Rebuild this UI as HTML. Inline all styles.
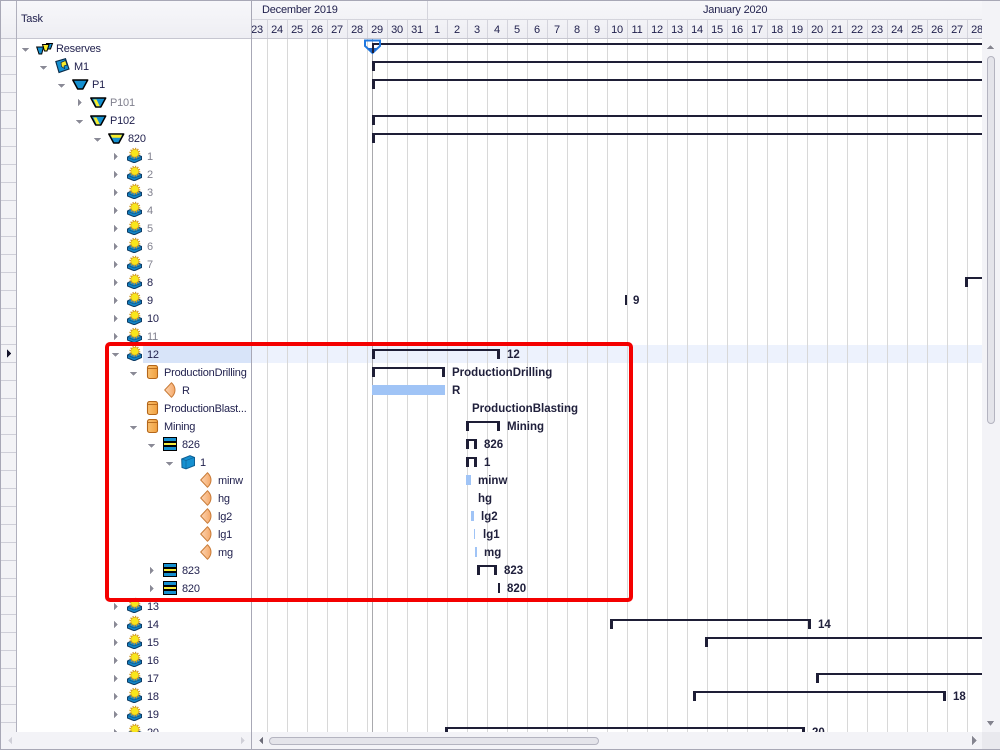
<!DOCTYPE html>
<html><head><meta charset="utf-8"><style>
html,body{margin:0;padding:0;background:#fff;width:1000px;height:750px;overflow:hidden}
#p{position:relative;width:1000px;height:750px;overflow:hidden;font-family:"Liberation Sans",sans-serif;font-size:11px;letter-spacing:-.2px;color:#1f1f4c}
svg{position:absolute;left:0;top:0}
.t{position:absolute;line-height:18px;height:18px;white-space:nowrap;margin-top:1px}
.g{color:#80808e}
.b{font-weight:bold;font-size:11.5px;letter-spacing:0;color:#20203c}
.d{position:absolute;top:19px;width:20px;height:19px;line-height:20px;text-align:center;margin-top:1px}
#hd{position:absolute;left:252px;top:0;width:730px;height:39px;overflow:hidden}
#hd .d{margin-left:-252px}
#tree{position:absolute;left:0;top:0;width:1000px;height:732px;overflow:hidden}
</style></head><body><div id="p">
<svg width="1000" height="750" viewBox="0 0 1000 750" shape-rendering="crispEdges">
<defs>
<linearGradient id="hg" x1="0" y1="0" x2="0" y2="1"><stop offset="0" stop-color="#f7f7fa"/><stop offset="1" stop-color="#eeeef3"/></linearGradient>
<linearGradient id="lf" x1="0" y1="0" x2="1" y2="0"><stop offset="0" stop-color="#fcd5b4"/><stop offset="1" stop-color="#f5a868"/></linearGradient>
<linearGradient id="cy" x1="0" y1="0" x2="1" y2="0"><stop offset="0" stop-color="#f9c070"/><stop offset="1" stop-color="#f0a040"/></linearGradient>
<g id="da"><polygon points="0,0 7,0 3.500,4" fill="#8a8a96"/></g>
<g id="ra"><polygon points="0,0 4,3.500 0,7" fill="#8a8a96"/></g>
<g id="sun" shape-rendering="auto">
<path d="M.5 9L4 7H11L14.500 8.500V11.500L8 14.500H6.500L.5 12Z" fill="#1487c8" stroke="#0d3c66"/>
<path d="M1 9.500L7 12 14 9.500" fill="none" stroke="#0b5a90" stroke-width=".8"/>
<circle cx="7.800" cy="5.200" r="4.600" fill="none" stroke="#d09a2a" stroke-width="1.800" stroke-dasharray="1.200 1.210"/>
<circle cx="7.800" cy="5.200" r="3.900" fill="#f8e61c" stroke="#d8a020" stroke-width=".6"/>
</g>
<g id="cyl" shape-rendering="auto"><rect x=".5" y=".5" width="10" height="13" rx="2" fill="url(#cy)" stroke="#b4661a" stroke-width="1.100"/><path d="M1 3.500H10" stroke="#b4661a" stroke-width=".9"/></g>
<g id="leaf" shape-rendering="auto"><path d="M.7 8L7.500 .7C10 3 11 5.500 11 8S10 13 7.500 15.300Z" fill="url(#lf)" stroke="#c87a36" stroke-linejoin="round"/></g>
<g id="st"><rect x="0" y="0" width="14" height="14" fill="#000"/><rect x="1" y="1" width="12" height="3" fill="#1590d0"/><rect x="1" y="6" width="12" height="2" fill="#f6ec3a"/><rect x="1" y="10" width="12" height="3" fill="#1590d0"/></g>
<g id="cube" shape-rendering="auto"><path d="M.7 4L9 .7 13.500 2.500V10.500L5 13.800 1 12.500Z" fill="#1590d0" stroke="#0e5f94"/><path d="M1 4L5 5.500 13 2.500M5 5.500V13.500" fill="none" stroke="#0e5f94" stroke-width=".6"/></g>
<g id="trb" shape-rendering="auto"><path d="M.8 1H15.700L10.800 10H5.700Z" fill="#1590d0" stroke="#000" stroke-width="1.500" stroke-linejoin="round"/></g>
<g id="try" shape-rendering="auto"><path d="M.8 1H15.700L10.800 10H5.700Z" fill="#1590d0" stroke="#000" stroke-width="1.500" stroke-linejoin="round"/><path d="M3.500 2.500H6.500L9.800 9.200H6.500Z" fill="#f8ec2a"/></g>
<g id="trt" shape-rendering="auto"><path d="M.8 1H15.700L10.800 10H5.700Z" fill="#1590d0" stroke="#000" stroke-width="1.500" stroke-linejoin="round"/><path d="M2.500 1.800H14L12.700 4.800H4Z" fill="#f8ec2a"/></g>
</defs>

<rect x="252" y="345" width="731" height="18" fill="#edf2fd"/>
<rect x="143" y="345" width="108" height="18" fill="#d8e4f9"/>

<!-- chart gridlines -->
<path d="M267.500 39V732M287.500 39V732M307.500 39V732M327.500 39V732M347.500 39V732M367.500 39V732M387.500 39V732M407.500 39V732M427.500 39V732M447.500 39V732M467.500 39V732M487.500 39V732M507.500 39V732M527.500 39V732M547.500 39V732M567.500 39V732M587.500 39V732M607.500 39V732M627.500 39V732M647.500 39V732M667.500 39V732M687.500 39V732M707.500 39V732M727.500 39V732M747.500 39V732M767.500 39V732M787.500 39V732M807.500 39V732M827.500 39V732M847.500 39V732M867.500 39V732M887.500 39V732M907.500 39V732M927.500 39V732M947.500 39V732M967.500 39V732" stroke="#d8d8d8" fill="none"/>
<rect x="372" y="39" width="1" height="693" fill="#a9a9ad"/>

<!-- headers -->
<rect x="1" y="1" width="981" height="37" fill="url(#hg)"/>
<rect x="982" y="1" width="18" height="38" fill="#f3f3f7"/>
<rect x="0" y="38" width="982" height="1" fill="#c6c6d0"/>
<rect x="252" y="19" width="730" height="1" fill="#d4d4dc"/>
<path d="M427.500 1V19M267.500 20V38M287.500 20V38M307.500 20V38M327.500 20V38M347.500 20V38M367.500 20V38M387.500 20V38M407.500 20V38M427.500 20V38M447.500 20V38M467.500 20V38M487.500 20V38M507.500 20V38M527.500 20V38M547.500 20V38M567.500 20V38M587.500 20V38M607.500 20V38M627.500 20V38M647.500 20V38M667.500 20V38M687.500 20V38M707.500 20V38M727.500 20V38M747.500 20V38M767.500 20V38M787.500 20V38M807.500 20V38M827.500 20V38M847.500 20V38M867.500 20V38M887.500 20V38M907.500 20V38M927.500 20V38M947.500 20V38M967.500 20V38" stroke="#d4d4dc" fill="none"/>

<!-- indicator column -->
<rect x="1" y="39" width="15" height="693" fill="#f3f3f6"/>
<path d="M1 56.500H16M1 74.500H16M1 92.500H16M1 110.500H16M1 128.500H16M1 146.500H16M1 164.500H16M1 182.500H16M1 200.500H16M1 218.500H16M1 236.500H16M1 254.500H16M1 272.500H16M1 290.500H16M1 308.500H16M1 326.500H16M1 344.500H16M1 362.500H16M1 380.500H16M1 398.500H16M1 416.500H16M1 434.500H16M1 452.500H16M1 470.500H16M1 488.500H16M1 506.500H16M1 524.500H16M1 542.500H16M1 560.500H16M1 578.500H16M1 596.500H16M1 614.500H16M1 632.500H16M1 650.500H16M1 668.500H16M1 686.500H16M1 704.500H16M1 722.500H16" stroke="#cfcfd8" fill="none"/>
<polygon points="7,349 11,353.500 7,358" fill="#14142a"/>
<rect x="16" y="0" width="1" height="732" fill="#b0b0bd"/>
<rect x="251" y="0" width="1" height="750" fill="#a8a8b6"/>

<!-- arrows -->
<use href="#da" x="22" y="48"/><use href="#da" x="40" y="66"/><use href="#da" x="58" y="84"/>
<use href="#ra" x="78" y="99"/><use href="#da" x="76" y="120"/><use href="#da" x="94" y="138"/>
<use href="#ra" x="114" y="153"/><use href="#ra" x="114" y="171"/><use href="#ra" x="114" y="189"/><use href="#ra" x="114" y="207"/><use href="#ra" x="114" y="225"/><use href="#ra" x="114" y="243"/><use href="#ra" x="114" y="261"/><use href="#ra" x="114" y="279"/><use href="#ra" x="114" y="297"/><use href="#ra" x="114" y="315"/><use href="#ra" x="114" y="333"/>
<use href="#da" x="112" y="353"/><use href="#da" x="130" y="372"/><use href="#da" x="130" y="426"/><use href="#da" x="148" y="444"/><use href="#da" x="166" y="462"/>
<use href="#ra" x="150" y="567"/><use href="#ra" x="150" y="585"/>
<use href="#ra" x="114" y="603"/><use href="#ra" x="114" y="621"/><use href="#ra" x="114" y="639"/><use href="#ra" x="114" y="657"/><use href="#ra" x="114" y="675"/><use href="#ra" x="114" y="693"/><use href="#ra" x="114" y="711"/><use href="#ra" x="114" y="729"/>

<!-- top icons -->
<g transform="translate(36,42)" shape-rendering="auto">
<path d="M13 1.500H19L17 7H14.500Z" transform="translate(-2.500,0)" fill="#1590d0" stroke="#000"/>
<path d="M6.500 2.500H13L11 9H8.500Z" fill="#f8ec2a" stroke="#000"/>
<path d="M.7 5H7.500L5.700 12H3Z" fill="#1590d0" stroke="#000"/>
</g>
<g transform="translate(55,58)" shape-rendering="auto">
<path d="M.8 3.500L10.500 .7 14 11 4 14.500Z" fill="#1590d0" stroke="#0a2a48" stroke-width="1.100"/>
<path d="M6 4.500L10.500 2.500 12 7 9 8 9.500 10.500 6.500 8.500Z" fill="#f8ec2a" stroke="#0a2a48" stroke-width=".7"/>
</g>
<use href="#trb" x="72" y="79"/>
<use href="#try" x="90" y="97"/>
<use href="#try" x="90" y="115"/>
<use href="#trt" x="108" y="133"/>

<use href="#sun" x="127" y="148"/><use href="#sun" x="127" y="166"/><use href="#sun" x="127" y="184"/><use href="#sun" x="127" y="202"/><use href="#sun" x="127" y="220"/><use href="#sun" x="127" y="238"/><use href="#sun" x="127" y="256"/><use href="#sun" x="127" y="274"/><use href="#sun" x="127" y="292"/><use href="#sun" x="127" y="310"/><use href="#sun" x="127" y="328"/><use href="#sun" x="127" y="346"/>
<use href="#sun" x="127" y="598"/><use href="#sun" x="127" y="616"/><use href="#sun" x="127" y="634"/><use href="#sun" x="127" y="652"/><use href="#sun" x="127" y="670"/><use href="#sun" x="127" y="688"/><use href="#sun" x="127" y="706"/><use href="#sun" x="127" y="724"/>

<use href="#cyl" x="147" y="365"/><use href="#cyl" x="147" y="401"/><use href="#cyl" x="147" y="419"/>
<use href="#leaf" x="164" y="382"/>
<use href="#st" x="163" y="437"/>
<use href="#cube" x="181" y="455"/>
<use href="#leaf" x="200" y="472"/><use href="#leaf" x="200" y="490"/><use href="#leaf" x="200" y="508"/><use href="#leaf" x="200" y="526"/><use href="#leaf" x="200" y="544"/>
<use href="#st" x="163" y="563"/><use href="#st" x="163" y="581"/>

<!-- bars -->
<g fill="#1e1e36">
<rect x="372" y="43" width="610" height="2"/><rect x="372" y="61" width="610" height="2"/><rect x="372" y="79" width="610" height="2"/><rect x="372" y="115" width="610" height="2"/><rect x="372" y="133" width="610" height="2"/>
<rect x="372" y="61" width="3" height="10"/><rect x="372" y="79" width="3" height="10"/><rect x="372" y="115" width="3" height="10"/><rect x="372" y="133" width="3" height="10"/>
<rect x="965" y="277" width="17" height="2"/><rect x="965" y="277" width="3" height="10"/>
<rect x="625" y="295" width="2" height="10"/>
<!-- 12 -->
<rect x="372" y="349" width="128" height="2"/><rect x="372" y="349" width="3" height="10"/><rect x="497" y="349" width="3" height="10"/>
<!-- PD -->
<rect x="372" y="367" width="73" height="2"/><rect x="372" y="367" width="3" height="10"/><rect x="442" y="367" width="3" height="10"/>
<!-- Mining -->
<rect x="466" y="421" width="34" height="2"/><rect x="466" y="421" width="3" height="10"/><rect x="497" y="421" width="3" height="10"/>
<!-- 826 / 1 -->
<rect x="466" y="439" width="11" height="2"/><rect x="466" y="439" width="3" height="10"/><rect x="474" y="439" width="3" height="10"/>
<rect x="466" y="457" width="11" height="2"/><rect x="466" y="457" width="3" height="10"/><rect x="474" y="457" width="3" height="10"/>
<!-- 823 -->
<rect x="477" y="565" width="20" height="2"/><rect x="477" y="565" width="3" height="10"/><rect x="494" y="565" width="3" height="10"/>
<rect x="498" y="583" width="2" height="10"/>
<!-- lower -->
<rect x="610" y="619" width="201" height="2"/><rect x="610" y="619" width="3" height="10"/><rect x="808" y="619" width="3" height="10"/>
<rect x="705" y="637" width="277" height="2"/><rect x="705" y="637" width="3" height="10"/>
<rect x="816" y="673" width="166" height="2"/><rect x="816" y="673" width="3" height="10"/>
<rect x="693" y="691" width="253" height="2"/><rect x="693" y="691" width="3" height="10"/><rect x="943" y="691" width="3" height="10"/>
<rect x="445" y="727" width="360" height="2"/><rect x="445" y="727" width="3" height="5"/><rect x="802" y="727" width="3" height="5"/>
</g>
<g fill="#a0c4f6">
<rect x="372" y="385" width="73" height="10"/>
<rect x="466" y="475" width="5" height="10"/>
<rect x="471" y="511" width="3" height="10"/>
<rect x="474" y="529" width="1" height="10"/>
<rect x="475" y="547" width="2" height="10"/>
</g>
<!-- milestone marker -->
<path d="M365 40.500H380V46L372.500 53 365 46Z" fill="#fff" fill-opacity="0" stroke="#1f78e0" stroke-width="2" shape-rendering="auto"/>
<polygon points="368,48 377,48 372.500,54" fill="#1f66c8" shape-rendering="auto"/>
<rect x="372" y="43" width="2" height="10" fill="#1e1e36"/>

<!-- scrollbars -->
<rect x="982" y="39" width="18" height="693" fill="#f3f3f7"/>
<polygon points="987,49 994,49 990.500,45" fill="#84848f"/>
<polygon points="987,721 994,721 990.500,726" fill="#84848f"/>
<rect x="987.500" y="56.500" width="7" height="367" rx="3.500" fill="#e4e4ea" stroke="#b4b4c0" shape-rendering="auto"/>
<rect x="1" y="732" width="250" height="17" fill="#f3f3f7"/>
<rect x="252" y="732" width="730" height="17" fill="#f3f3f7"/>
<rect x="982" y="732" width="18" height="17" fill="#e9e9ee"/>
<polygon points="12,737 12,744 8,740.500" fill="#d0d0d8"/>
<polygon points="241,737 241,744 245,740.500" fill="#d0d0d8"/>
<polygon points="263,737 263,744 259,740.500" fill="#6c6c78"/>
<polygon points="972,736 972,745 977,740.500" fill="#84848f"/>
<rect x="269.500" y="737.500" width="329" height="7" rx="3.500" fill="#e4e4ea" stroke="#b4b4c0" shape-rendering="auto"/>

<!-- outer border -->
<rect x="0" y="0" width="1000" height="1" fill="#a8a8b6"/>
<rect x="0" y="0" width="1" height="750" fill="#a8a8b6"/>
<rect x="0" y="749" width="1000" height="1" fill="#a8a8b6"/>
</svg>

<div class="t" style="left:21px;top:9px">Task</div>
<div id="hd">
<div class="t" style="left:10px;top:0">December 2019</div>
<div class="t" style="left:451px;top:0">January 2020</div>
<div class="d" style="left:247px">23</div><div class="d" style="left:267px">24</div><div class="d" style="left:287px">25</div><div class="d" style="left:307px">26</div><div class="d" style="left:327px">27</div><div class="d" style="left:347px">28</div><div class="d" style="left:367px">29</div><div class="d" style="left:387px">30</div><div class="d" style="left:407px">31</div>
<div class="d" style="left:427px">1</div><div class="d" style="left:447px">2</div><div class="d" style="left:467px">3</div><div class="d" style="left:487px">4</div><div class="d" style="left:507px">5</div><div class="d" style="left:527px">6</div><div class="d" style="left:547px">7</div><div class="d" style="left:567px">8</div><div class="d" style="left:587px">9</div><div class="d" style="left:607px">10</div><div class="d" style="left:627px">11</div><div class="d" style="left:647px">12</div><div class="d" style="left:667px">13</div><div class="d" style="left:687px">14</div><div class="d" style="left:707px">15</div><div class="d" style="left:727px">16</div><div class="d" style="left:747px">17</div><div class="d" style="left:767px">18</div><div class="d" style="left:787px">19</div><div class="d" style="left:807px">20</div><div class="d" style="left:827px">21</div><div class="d" style="left:847px">22</div><div class="d" style="left:867px">23</div><div class="d" style="left:887px">24</div><div class="d" style="left:907px">25</div><div class="d" style="left:927px">26</div><div class="d" style="left:947px">27</div><div class="d" style="left:967px">28</div>
</div>

<div id="tree">
<div class="t" style="left:56px;top:39px">Reserves</div>
<div class="t" style="left:74px;top:57px">M1</div>
<div class="t" style="left:92px;top:75px">P1</div>
<div class="t g" style="left:110px;top:93px">P101</div>
<div class="t" style="left:110px;top:111px">P102</div>
<div class="t" style="left:128px;top:129px">820</div>
<div class="t g" style="left:147px;top:147px">1</div>
<div class="t g" style="left:147px;top:165px">2</div>
<div class="t g" style="left:147px;top:183px">3</div>
<div class="t g" style="left:147px;top:201px">4</div>
<div class="t g" style="left:147px;top:219px">5</div>
<div class="t g" style="left:147px;top:237px">6</div>
<div class="t g" style="left:147px;top:255px">7</div>
<div class="t" style="left:147px;top:273px">8</div>
<div class="t" style="left:147px;top:291px">9</div>
<div class="t" style="left:147px;top:309px">10</div>
<div class="t g" style="left:147px;top:327px">11</div>
<div class="t" style="left:147px;top:345px">12</div>
<div class="t" style="left:164px;top:363px">ProductionDrilling</div>
<div class="t" style="left:182px;top:381px">R</div>
<div class="t" style="left:164px;top:399px">ProductionBlast...</div>
<div class="t" style="left:164px;top:417px">Mining</div>
<div class="t" style="left:182px;top:435px">826</div>
<div class="t" style="left:200px;top:453px">1</div>
<div class="t" style="left:218px;top:471px">minw</div>
<div class="t" style="left:218px;top:489px">hg</div>
<div class="t" style="left:218px;top:507px">lg2</div>
<div class="t" style="left:218px;top:525px">lg1</div>
<div class="t" style="left:218px;top:543px">mg</div>
<div class="t" style="left:182px;top:561px">823</div>
<div class="t" style="left:182px;top:579px">820</div>
<div class="t" style="left:147px;top:597px">13</div>
<div class="t" style="left:147px;top:615px">14</div>
<div class="t" style="left:147px;top:633px">15</div>
<div class="t" style="left:147px;top:651px">16</div>
<div class="t" style="left:147px;top:669px">17</div>
<div class="t" style="left:147px;top:687px">18</div>
<div class="t" style="left:147px;top:705px">19</div>
<div class="t" style="left:147px;top:723px">20</div>

<div class="t b" style="left:633px;top:291px">9</div>
<div class="t b" style="left:507px;top:345px">12</div>
<div class="t b" style="left:452px;top:363px">ProductionDrilling</div>
<div class="t b" style="left:452px;top:381px">R</div>
<div class="t b" style="left:472px;top:399px">ProductionBlasting</div>
<div class="t b" style="left:507px;top:417px">Mining</div>
<div class="t b" style="left:484px;top:435px">826</div>
<div class="t b" style="left:484px;top:453px">1</div>
<div class="t b" style="left:478px;top:471px">minw</div>
<div class="t b" style="left:478px;top:489px">hg</div>
<div class="t b" style="left:481px;top:507px">lg2</div>
<div class="t b" style="left:483px;top:525px">lg1</div>
<div class="t b" style="left:484px;top:543px">mg</div>
<div class="t b" style="left:504px;top:561px">823</div>
<div class="t b" style="left:507px;top:579px">820</div>
<div class="t b" style="left:818px;top:615px">14</div>
<div class="t b" style="left:953px;top:687px">18</div>
<div class="t b" style="left:812px;top:723px">20</div>
</div>

<div style="position:absolute;left:105px;top:342px;width:520px;height:252px;border:4px solid #f40000;border-radius:5px"></div>
</div></body></html>
